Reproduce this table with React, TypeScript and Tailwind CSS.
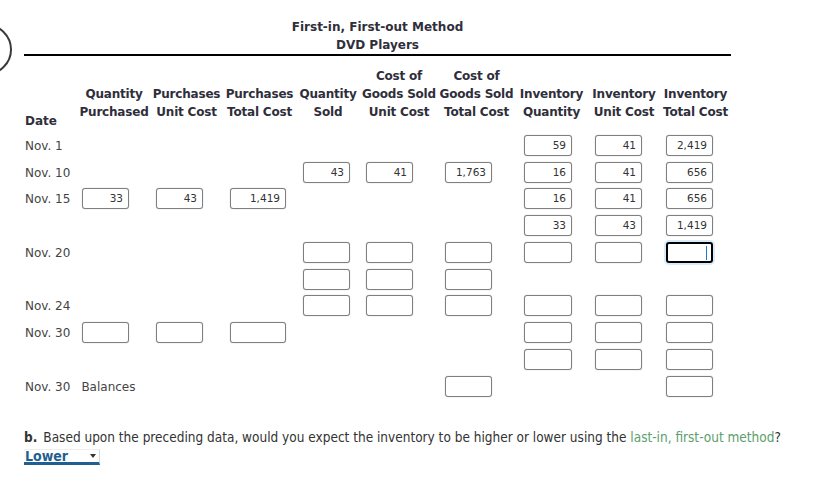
import React from "react";

const COLS =
  "grid grid-cols-[54px_72px_73px_73px_64px_78px_77px_73px_72px_71px]";

const INPUT_POS = [
  "",
  "ml-[4px] w-[47px]",
  "ml-[6px] w-[47px]",
  "ml-[7px] w-[56px]",
  "ml-[7px] w-[47px]",
  "ml-[6px] w-[47px]",
  "ml-[7px] w-[47px]",
  "ml-[9px] w-[48px]",
  "ml-[7px] w-[47px]",
  "ml-[6px] w-[47px]",
];

type Cell = string | null | "FOCUS";

type Row = { label: React.ReactNode; h: string; cells: Cell[] };

const N = null;

const rows: Row[] = [
  { label: "Nov. 1", h: "h-[27px]", cells: [N, N, N, N, N, N, "59", "41", "2,419"] },
  { label: "Nov. 10", h: "h-[26px]", cells: [N, N, N, "43", "41", "1,763", "16", "41", "656"] },
  { label: "Nov. 15", h: "h-[27px]", cells: ["33", "43", "1,419", N, N, N, "16", "41", "656"] },
  { label: "", h: "h-[27px]", cells: [N, N, N, N, N, N, "33", "43", "1,419"] },
  { label: "Nov. 20", h: "h-[27px]", cells: [N, N, N, "", "", "", "", "", "FOCUS"] },
  { label: "", h: "h-[26px]", cells: [N, N, N, "", "", "", N, N, N] },
  { label: "Nov. 24", h: "h-[27px]", cells: [N, N, N, "", "", "", "", "", ""] },
  { label: "Nov. 30", h: "h-[27px]", cells: ["", "", "", N, N, N, "", "", ""] },
  { label: "", h: "h-[27px]", cells: [N, N, N, N, N, N, "", "", ""] },
  {
    label: (
      <span className="whitespace-nowrap">
        Nov. 30<span className="ml-[11px]">Balances</span>
      </span>
    ),
    h: "h-[27px]",
    cells: [N, N, N, N, N, "", N, N, ""],
  },
];

const headers: string[][] = [
  ["Quantity", "Purchased"],
  ["Purchases", "Unit Cost"],
  ["Purchases", "Total Cost"],
  ["Quantity", "Sold"],
  ["Cost of", "Goods Sold", "Unit Cost"],
  ["Cost of", "Goods Sold", "Total Cost"],
  ["Inventory", "Quantity"],
  ["Inventory", "Unit Cost"],
  ["Inventory", "Total Cost"],
];

function Box({ value, pos }: { value: string; pos: string }) {
  if (value === "FOCUS") {
    return (
      <div
        className={`${pos} h-[21px] rounded-[3px] border-2 border-black bg-white shadow-[0_0_0_2px_#d6ecfb] relative`}
      >
        <div className="absolute right-[4px] top-[2px] h-[14px] w-px bg-[#1a7bd0]" />
      </div>
    );
  }
  return (
    <div
      className={`${pos} h-[21px] rounded-[3px] border border-[#7f7f7f] bg-white shadow-[0_0_1px_#9a9a9a] text-right pr-[5px] text-[10.5px] leading-[19px] text-[#333]`}
    >
      {value}
    </div>
  );
}

export default function App() {
  return (
    <div
      className="relative w-[829px] h-[487px] overflow-hidden bg-white text-[#333]"
      style={{ fontFamily: '"DejaVu Sans", Verdana, sans-serif' }}
    >
      <div className="absolute left-[-39px] top-[24px] w-[51px] h-[51px] rounded-full border-2 border-[#3a3a3a]" />

      <div className="ml-[24px] w-[707px] pt-[18px]">
        <div className="text-center font-bold text-[12px] leading-[18px] text-[#2f2f3c]">
          <div>First-in, First-out Method</div>
          <div>DVD Players</div>
        </div>
        <div className="h-[2px] bg-black" />

        <div className={`${COLS} mt-[11px] h-[63px] items-end`}>
          <div className="font-bold text-[12px] leading-[18px] text-[#2f2f3c] pl-[1px]">
            Date
          </div>
          {headers.map((h, i) => (
            <div
              key={i}
              className="pb-[9px] text-center font-bold text-[12px] leading-[18px] tracking-[-0.2px] text-[#2f2f3c] whitespace-nowrap"
            >
              {h.map((l, j) => (
                <div key={j}>{l}</div>
              ))}
            </div>
          ))}
        </div>

        <div className="mt-[5px]">
          {rows.map((r, ri) => (
            <div key={ri} className={`${COLS} ${r.h} items-start`}>
              <div className="text-[12px] leading-[22px] text-[#444] pl-[1px]">
                {r.label}
              </div>
              {r.cells.map((c, ci) => (
                <div key={ci}>
                  {c !== null && <Box value={c} pos={INPUT_POS[ci + 1]} />}
                </div>
              ))}
            </div>
          ))}
        </div>
      </div>

      <div
        className="ml-[24px] mt-[26px] text-[13.5px] leading-[16px] text-[#333] whitespace-nowrap"
        style={{
          fontFamily:
            '"DejaVu Sans Condensed", "Liberation Sans Narrow", "DejaVu Sans", sans-serif',
          fontStretch: "condensed",
        }}
      >
        <span className="font-bold">b.</span>
        <span className="ml-[6px]">
          Based upon the preceding data, would you expect the inventory to be higher or lower
          using the{" "}
          <span className="text-[#5c9e6c]">last-in, first-out method</span>?
        </span>
        <div className="mt-[4px] relative w-[76px] h-[16px] border-b-[3px] border-[#1f5f91] border-r border-r-[#d8d8d8] border-t border-t-[#eeeeee]">
          <span className="absolute left-[1px] top-[-1px] font-bold text-[14px] leading-[15px] text-[#1f5f91]">
            Lower
          </span>
          <span className="absolute right-[3px] top-[4px] w-0 h-0 border-l-[3px] border-r-[3px] border-t-[4px] border-l-transparent border-r-transparent border-t-[#333]" />
        </div>
      </div>
    </div>
  );
}
